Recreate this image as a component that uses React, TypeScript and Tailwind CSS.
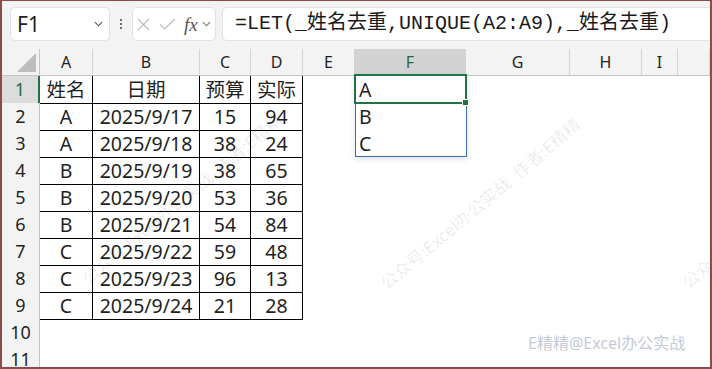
import React from "react";

const cols = ["A", "B", "C", "D", "E", "F", "G", "H", "I", ""];

const table: string[][] = [
  ["姓名", "日期", "预算", "实际"],
  ["A", "2025/9/17", "15", "94"],
  ["A", "2025/9/18", "38", "24"],
  ["B", "2025/9/19", "38", "65"],
  ["B", "2025/9/20", "53", "36"],
  ["B", "2025/9/21", "54", "84"],
  ["C", "2025/9/22", "59", "48"],
  ["C", "2025/9/23", "96", "13"],
  ["C", "2025/9/24", "21", "28"],
];

const spill = ["A", "B", "C"];

const grid = "grid grid-cols-[38px_53px_107px_51px_52px_52px_111px_104px_72px_36px_1fr]";
const sans = "font-['Noto_Sans','Noto_Sans_CJK_SC',sans-serif]";

const Chevron = ({ className }: { className?: string }) => (
  <svg viewBox="0 0 10 6" className={className} fill="none" stroke="currentColor" strokeWidth="1.2">
    <path d="M1 1l4 4 4-4" />
  </svg>
);

// faint diagonal watermark, drawn over the sheet
const Watermark = ({ x, y }: { x: number; y: number }) => (
  <span
    className={`absolute pointer-events-none whitespace-nowrap origin-left -rotate-[40deg] text-[17px] leading-[24px] text-[#000]/[0.09] ${sans}`}
    style={{ left: x, top: y }}
  >
    公众号:Excel办公实战&nbsp;&nbsp;作者:E精精
  </span>
);

export default function App() {
  return (
    <div className="w-[712px] h-[369px] border-t border-x-2 border-b-2 border-[#8a4b4b] overflow-hidden">
      <div className={`relative w-full h-full bg-white text-[#1f1f1f] ${sans}`}>
        {/* formula bar */}
        <div className="h-[48px] bg-[#f3f3f3] flex items-start pt-[6px] pl-[8px]">
          <div className="w-[100px] h-[34px] bg-white border border-[#e2e2e2] rounded-[5px] flex items-center justify-between pl-[6px] pr-[6px]">
            <span className="text-[21px] leading-none">F1</span>
            <Chevron className="w-[9px] h-[6px] text-[#555]" />
          </div>
          <div className="w-[22px] h-[34px] flex flex-col items-center justify-center gap-[2px]">
            <span className="w-[2px] h-[2px] bg-[#444] rounded-full" />
            <span className="w-[2px] h-[2px] bg-[#444] rounded-full" />
            <span className="w-[2px] h-[2px] bg-[#444] rounded-full" />
          </div>
          <div className="w-[84px] h-[34px] bg-white border border-[#e2e2e2] rounded-[5px] flex items-center pl-[4px]">
            <svg viewBox="0 0 13 13" className="w-[13px] h-[13px] text-[#bdbdbd]" fill="none" stroke="currentColor" strokeWidth="1.2">
              <path d="M1 1l11 11M12 1L1 12" />
            </svg>
            <svg viewBox="0 0 17 12" className="ml-[9px] w-[17px] h-[12px] text-[#bdbdbd]" fill="none" stroke="currentColor" strokeWidth="1.2">
              <path d="M1 6.5l4.5 4.5L16 1" />
            </svg>
            <span className="ml-[8px] text-[19px] leading-none italic text-[#555] font-['Liberation_Serif',serif]">fx</span>
            <Chevron className="ml-[4px] w-[9px] h-[6px] text-[#777]" />
          </div>
          <div className="ml-[6px] flex-1 h-[34px] bg-white border border-[#e2e2e2] border-r-0 rounded-l-[5px] flex items-center pl-[12px]">
            <span className="text-[20px] leading-none text-[#1a1a1a] font-['Liberation_Mono','Noto_Sans_CJK_SC',monospace] whitespace-nowrap">
              =LET(_姓名去重,UNIQUE(A2:A9),_姓名去重)
            </span>
          </div>
        </div>

        {/* column headers */}
        <div className={`${grid} h-[27px] bg-[#f3f3f3] border-b border-[#c4c4c4]`}>
          <div className="relative border-r border-[#c4c4c4]">
            <svg viewBox="0 0 19 19" className="absolute right-[3px] bottom-[3px] w-[19px] h-[19px]">
              <polygon points="19,0 19,19 0,19" fill="#bdbdbd" />
            </svg>
          </div>
          {cols.map((c, i) => (
            <div
              key={i}
              className={`flex items-center justify-center text-[16px] border-r border-[#d4d4d4] ${
                c === "F" ? "bg-[#d3d3d3] text-[#1e6b41]" : "text-[#1f1f1f]"
              }`}
            >
              {c}
            </div>
          ))}
        </div>

        {/* rows */}
        {Array.from({ length: 11 }).map((_, r) => {
          const data = table[r];
          return (
            <div key={r} className={`${grid} h-[27px]`}>
              <div
                className={`flex items-center justify-center text-[18px] border-b border-[#d4d4d4] ${
                  r === 0
                    ? "bg-[#dcdcdc] text-[#2a6a48] border-r-2 border-r-[#217346]"
                    : "bg-[#f3f3f3] border-r border-r-[#c4c4c4]"
                }`}
              >
                {r + 1}
              </div>
              {[0, 1, 2, 3].map((c) => (
                <div
                  key={c}
                  className={`flex items-center justify-center text-[19.5px] leading-none ${
                    data ? "border-r border-b border-black" : ""
                  }`}
                >
                  {data ? data[c] : ""}
                </div>
              ))}
              <div />
              <div className="flex items-center pl-[4px] text-[19.5px] leading-none">{spill[r] ?? ""}</div>
              <div />
              <div />
              <div />
              <div />
            </div>
          );
        })}

        {/* spill range and active cell */}
        <div className="absolute left-[353px] top-[74px] w-[112px] h-[82px] border border-[#3d6db0] shadow-[0_2px_6px_rgba(60,90,140,0.18)] pointer-events-none" />
        <div className="absolute left-[352px] top-[73px] w-[113px] h-[30px] border-2 border-[#217346] pointer-events-none" />
        <div className="absolute left-[460px] top-[98px] w-[7px] h-[7px] bg-[#217346] border border-white pointer-events-none" />

        {/* watermarks */}
        <Watermark x={83} y={268} />
        <Watermark x={381} y={273} />
        <Watermark x={683} y={272} />
        <span className={`absolute left-[526px] top-[330px] text-[16px] text-[#c6cad8] whitespace-nowrap pointer-events-none ${sans}`}>
          E精精@Excel办公实战
        </span>
      </div>
    </div>
  );
}
